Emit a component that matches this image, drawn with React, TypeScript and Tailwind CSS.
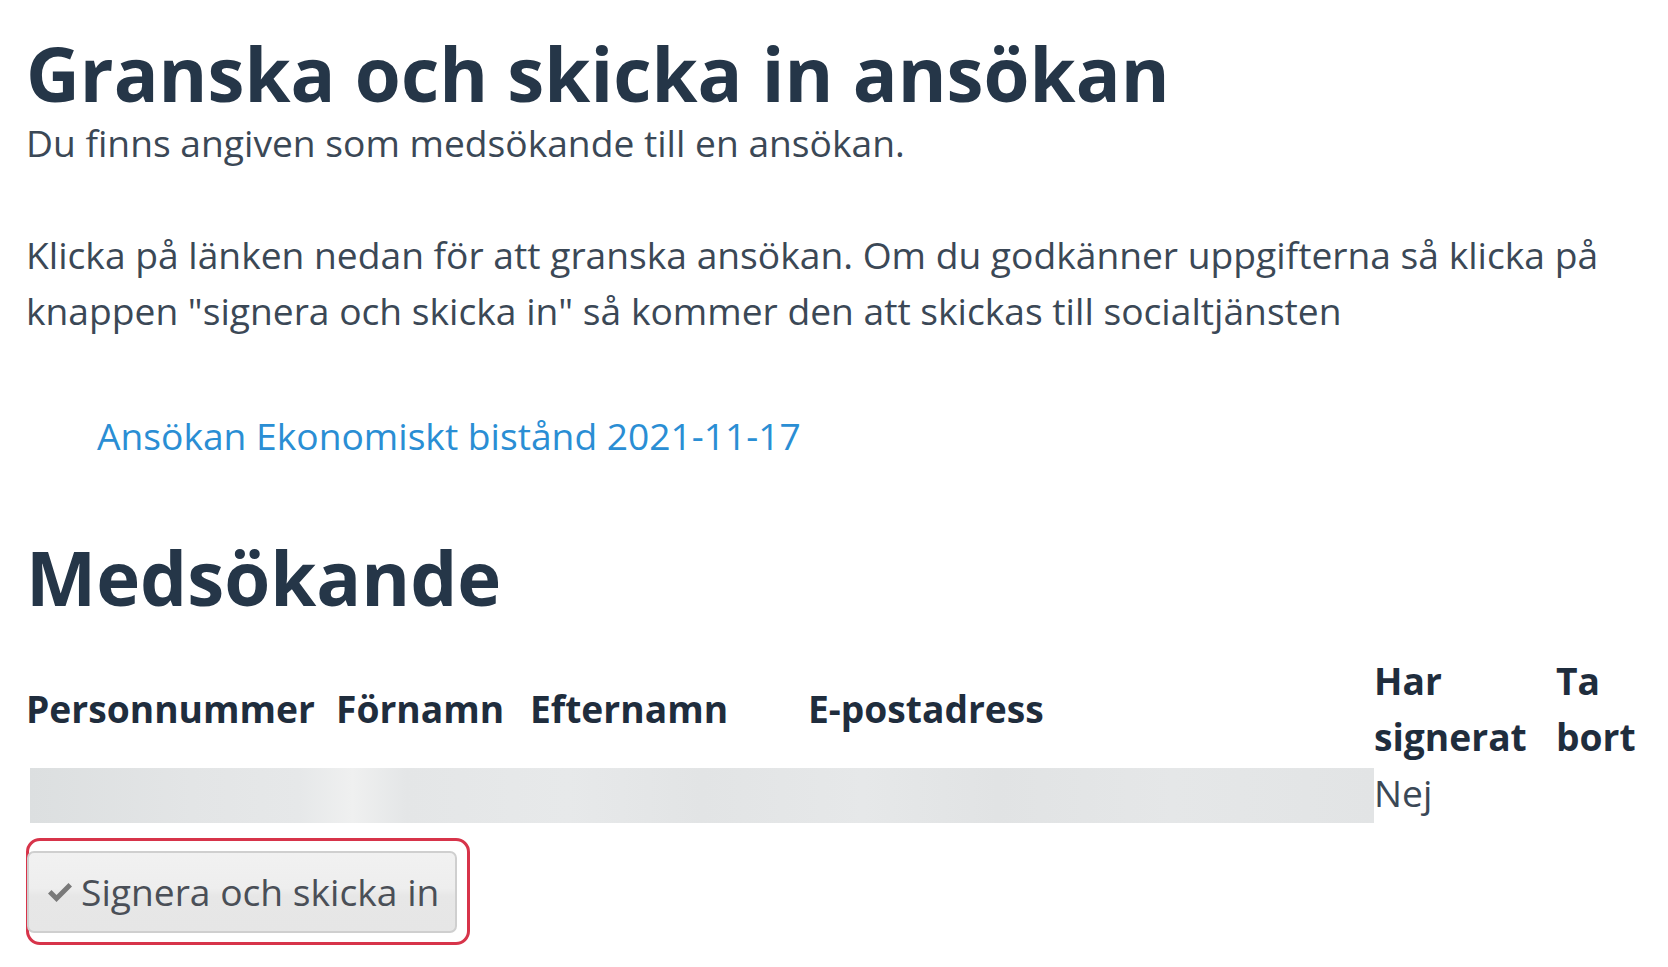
export default function App() {
  return (
    <div className="min-h-screen bg-white px-[26px] pt-[33px] font-['Open_Sans',sans-serif] text-[#3b4856]">
      <h1 className="text-[74.4px] font-bold leading-[1.1] text-[#253648]">Granska och skicka in ansökan</h1>
      <p className="text-[37.2px] leading-[56px]">
        Du finns angiven som medsökande till en ansökan.
        <br />
        <br />
        Klicka på länken nedan för att granska ansökan. Om du godkänner uppgifterna så klicka på knappen "signera och
        skicka in" så kommer den att skickas till socialtjänsten
      </p>

      <ul className="mt-[69px] pl-[71px]">
        <li className="text-[37.2px] leading-[56px]">
          <a href="#" className="text-[#2a8ed4]">
            Ansökan Ekonomiskt bistånd 2021-11-17
          </a>
        </li>
      </ul>

      <h2 className="mt-[73px] text-[74.4px] font-bold leading-[1.1] text-[#253648]">Medsökande</h2>

      <table className="mt-[34px] w-full table-fixed border-collapse text-left text-[37.2px] leading-[56px]">
        <colgroup>
          <col className="w-[310px]" />
          <col className="w-[194px]" />
          <col className="w-[278px]" />
          <col className="w-[566px]" />
          <col className="w-[182px]" />
          <col />
        </colgroup>
        <thead>
          <tr className="font-bold text-[#1f2d3d]">
            <th className="p-0 align-middle">Personnummer</th>
            <th className="p-0 align-middle">Förnamn</th>
            <th className="p-0 align-middle">Efternamn</th>
            <th className="p-0 align-middle">E-postadress</th>
            <th className="p-0 align-middle">Har signerat</th>
            <th className="p-0 align-middle">Ta bort</th>
          </tr>
        </thead>
        <tbody>
          <tr>
            {/* redacted row, blurred in the screenshot */}
            <td colSpan={4} className="p-0 align-top">
              <div className="ml-[4px] mt-[3px] h-[55px] bg-[linear-gradient(90deg,#dcdfe0_0%,#e3e5e6_12%,#e6e8e9_20%,#eff0f0_24%,#e4e6e7_28%,#e7e9ea_40%,#e2e4e5_50%,#e6e8e9_62%,#e1e3e4_72%,#e5e7e8_85%,#e2e4e5_100%)]" />
            </td>
            <td className="p-0 align-top">Nej</td>
            <td className="p-0" />
          </tr>
        </tbody>
      </table>

      <div className="mt-[15px] inline-block rounded-[14px] border-[3px] border-[#d7344a] pb-[9px] pr-[10px] pt-[10px]">
        <button className="-ml-[2px] flex items-center gap-[9px] rounded-[7px] border-2 border-[#cfcfcf] bg-[linear-gradient(180deg,#f1f1f1_0%,#eeeeee_45%,#e7e7e7_55%,#e6e6e6_100%)] py-[11px] pl-[19px] pr-[16px] text-[37.2px] leading-[56px] text-[#4a4f57]">
          <svg width="24" height="19" viewBox="0 0 24 19" className="mt-[2px]">
            <path d="M0 10.5 L3.5 7 L8.5 12 L20.5 0 L24 3.5 L8.5 19 Z" fill="#7a7a7a" />
          </svg>
          <span>Signera och skicka in</span>
        </button>
      </div>
    </div>
  )
}
